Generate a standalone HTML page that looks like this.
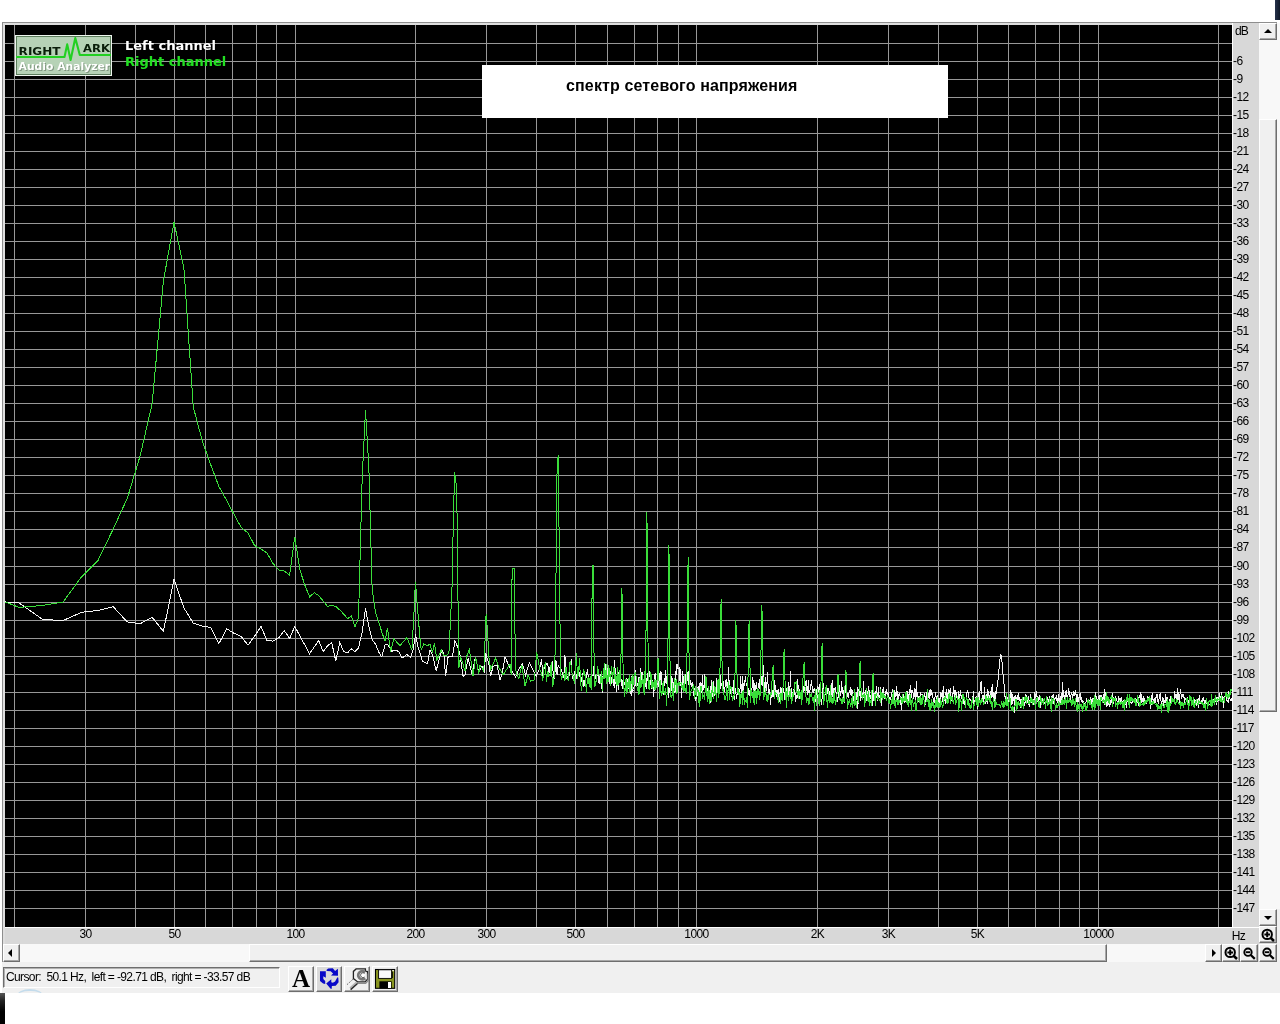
<!DOCTYPE html>
<html lang="ru"><head><meta charset="utf-8"><title>RightMark Audio Analyzer - спектр сетевого напряжения</title>
<style>
html,body{margin:0;padding:0;width:1280px;height:1024px;overflow:hidden;background:#fff}
body{position:relative;font-family:"Liberation Sans",sans-serif;font-size:12px;color:#000}
div,svg{position:absolute;box-sizing:border-box}
#win{left:0;top:22px;width:1280px;height:971px;background:#f0f0f0}
#lwhite{left:0;top:0;width:2px;height:993px;background:#fff}
#rwhite{left:1277px;top:0;width:3px;height:23px;background:#fff}
#frame{left:2px;top:22px;width:1275px;height:940px;border:solid #8e8e8e;border-width:1px 0 0 1px;background:#d8d8d8}
#frame2{left:3px;top:23px;width:1274px;height:939px;border:solid #dedede;border-width:2px 0 0 2px}
#plotbg{left:5px;top:25px;width:1227px;height:902px;background:#000}
#pl{left:0;top:0;width:1280px;height:1024px}
#axr{left:1232px;top:23px;width:27px;height:921px;background:#d8d8d8;border-left:1px solid #fff}
#axb{left:5px;top:927px;width:1254px;height:17px;background:#d8d8d8;border-top:1px solid #fff}
.yl{left:1233px;width:30px;height:14px;line-height:14px;font-size:12px;letter-spacing:-0.6px;white-space:nowrap}
.xl{top:927px;width:41px;height:14px;line-height:14px;text-align:center;font-size:12px;letter-spacing:-0.6px;white-space:nowrap}
#vs{left:1259px;top:23px;width:21px;height:886px;background:#f8f8f8}
#hs{left:3px;top:944px;width:1203px;height:18px;background:#f8f8f8}
.btn{background:#f0f0f0;border:1px solid;border-color:#fff #6e6e6e #6e6e6e #fff;box-shadow:inset -1px -1px 0 #a8a8a8}
.mag{left:0;top:0;width:16px;height:16px}
.tri{width:0;height:0;border-style:solid}
#title{left:482px;top:65px;width:466px;height:53px;background:#fff}
#title span{will-change:transform;position:absolute;left:84px;top:11px;font-size:16px;letter-spacing:0.14px;font-weight:bold;line-height:20px;white-space:nowrap;color:#000}
#legend{left:124.5px;will-change:transform;top:38px;font-family:"DejaVu Sans","Liberation Sans",sans-serif;font-weight:bold;font-size:13px;line-height:16px;white-space:nowrap}
#status{left:3px;top:967px;width:277px;height:21px;border:1px solid;border-color:#6e6e6e #fff #fff #6e6e6e;box-shadow:inset 1px 1px 0 #b0b0b0;background:#f0f0f0}
#status span{will-change:transform;position:absolute;left:2px;top:2px;font-size:12px;letter-spacing:-0.62px;white-space:pre;line-height:14px}
.tb{top:966px;width:26px;height:26px}
</style></head><body>
<div id="win"></div><div id="lwhite"></div><div id="rwhite"></div>
<div id="frame"></div><div id="frame2"></div>
<div id="plotbg"></div>
<div id="axr"></div><div id="axb"></div>
<svg id="pl" viewBox="0 0 1280 1024" shape-rendering="crispEdges">
<defs><clipPath id="cp"><rect x="5" y="25" width="1227" height="902"/></clipPath></defs>
<path d="M14.5,25V927M85.5,25V927M135.5,25V927M174.5,25V927M205.5,25V927M232.5,25V927M256.5,25V927M276.5,25V927M295.5,25V927M415.5,25V927M486.5,25V927M536.5,25V927M575.5,25V927M607.5,25V927M634.5,25V927M657.5,25V927M678.5,25V927M696.5,25V927M817.5,25V927M888.5,25V927M938.5,25V927M977.5,25V927M1008.5,25V927M1035.5,25V927M1059.5,25V927M1079.5,25V927M1098.5,25V927M1218.5,25V927M5,43.5H1232M5,61.5H1232M5,79.5H1232M5,97.5H1232M5,115.5H1232M5,133.5H1232M5,151.5H1232M5,169.5H1232M5,187.5H1232M5,205.5H1232M5,223.5H1232M5,241.5H1232M5,259.5H1232M5,277.5H1232M5,295.5H1232M5,313.5H1232M5,331.5H1232M5,349.5H1232M5,367.5H1232M5,385.5H1232M5,403.5H1232M5,421.5H1232M5,439.5H1232M5,457.5H1232M5,475.5H1232M5,493.5H1232M5,511.5H1232M5,529.5H1232M5,547.5H1232M5,566.5H1232M5,584.5H1232M5,602.5H1232M5,620.5H1232M5,638.5H1232M5,656.5H1232M5,674.5H1232M5,692.5H1232M5,710.5H1232M5,728.5H1232M5,746.5H1232M5,764.5H1232M5,782.5H1232M5,800.5H1232M5,818.5H1232M5,836.5H1232M5,854.5H1232M5,872.5H1232M5,890.5H1232M5,908.5H1232" stroke="#989898" stroke-width="1" fill="none"/>
<g clip-path="url(#cp)" fill="none" stroke-width="1" stroke-linejoin="miter">
<polyline stroke="#f4f4f4" points="-7.6,601 19.2,603 42.5,619.4 63.1,620.6 81.4,612.3 98,610.5 113.2,606.7 127.2,621.9 140.1,623.7 152.1,617.3 163.4,631.3 174,579.2 183.9,607.9 193.3,623.2 202.3,626.2 210.8,627.5 218.9,643.5 226.7,628.8 234.1,633.3 241.2,636.5 248,645.2 254.6,636 261,626.4 267.1,640.6 273,641.1 278.7,637.8 284.2,630.5 289.6,638.4 294.8,626.4 299.9,636 304.8,645 309.6,653.7 314.2,647 318.7,640.6 323.2,651.5 327.5,646 331.7,642.5 335.8,661.1 339.8,642.5 343.7,651.5 347.5,652.9 351.3,648.8 354.9,651.5 358.5,648 362.1,632.4 365.5,608.3 368.9,626.9 372.2,640 375.5,643.9 378.7,652 381.8,657 385,645 387.5,644.4 391.9,651.2 396.2,650 398.8,651.9 401.9,658.1 406.9,654.4 410.6,657.5 413.1,650 415.6,634.4 417.5,645 422.5,661.2 427.5,663.8 430,650 432.5,655 436.2,670.6 441.9,649.4 443.8,653.8 445.6,676.2 448.1,656.9 452.5,656.2 455,640.6 458.1,648.1 460,655 463.1,676.2 465,675 468.1,658.1 471.9,673.8 475.6,656.9 478.8,672.5 481.9,666.2 484.4,671.2 485.6,653.1 488.8,663.8 490.6,676.2 493.1,666.2 496.9,665 500,680 501.9,675 505,656.9 510,668.1 515.6,676.9 518.8,669.4 522.5,663.8 525.6,675 529.4,662.5 533.8,671.2 536.2,676.2 540,667.5 541.6,659 542.8,676.6 544.1,668.3 545.3,665.3 546.5,663.8 547.7,663.7 548.9,674 550.1,666.1 551.3,664.7 552.5,661.5 553.6,681.8 554.8,674.5 555.9,659.7 557.1,675.4 558.2,665 559.3,668 560.5,667.2 561.6,670.7 562.7,675.3 563.8,677.2 564.9,655.1 566,670.3 567,679.3 568.1,676 569.2,675.8 570.2,662.3 571.3,660.4 572.3,678.3 573.4,676.5 574.4,674.3 575.5,668.4 576.5,678.9 577.5,669.2 578.5,669.2 579.5,675.5 580.5,672.8 581.5,682 582.5,672.9 583.5,686.2 584.4,685 585.4,677.5 586.4,677.7 587.3,669 588.3,677.3 589.3,679.4 590.2,687 591.1,682.1 592.1,675.4 593,675.9 593.9,666.3 594.8,679.6 595.8,676.2 596.7,678.9 597.6,670.7 598.5,680.5 599.4,684 600.2,674.1 600.8,682.7 601.2,680.2 601.8,687.2 602.5,693.3 603.2,670.5 603.8,668.8 604.2,668.3 604.8,675 605.2,664.1 605.8,671 606.2,681.4 606.8,678.7 607.2,667.8 607.8,679.9 608.2,678.5 608.8,666.4 609.5,683.6 610.2,681.4 610.8,670.8 611.2,683.6 611.8,677.7 612.2,676.1 612.8,679 613.5,679.3 614.2,688.1 614.8,660.2 615.5,684 616.2,677.8 616.8,691.7 617.2,669.7 617.8,680.6 618.2,689.8 618.8,671.6 619.2,682.5 619.8,678.8 620.2,674.1 620.8,671.7 621.2,685.5 621.8,682.3 622.2,680.3 622.8,687.8 623.2,689.3 623.8,683.5 624.2,684 624.8,684 625.2,680.7 625.8,683.4 626.2,677.8 626.8,685.9 627.5,679.1 628.5,689.2 629.2,683.9 629.8,689.8 630.5,689.7 631.2,696.2 631.8,676.3 632.2,683.3 632.8,692 633.5,689.5 634.2,686.6 634.8,686.5 635.2,684.7 635.8,670.3 636.2,680.7 636.8,678.9 637.2,686.3 637.8,683.9 638.2,683.2 638.8,676.8 639.2,687.1 639.8,683.5 640.2,671.7 640.8,667.6 641.5,680.8 642.2,671.7 642.8,682.9 643.5,682.4 644.2,679.3 644.8,683 645.2,680.2 645.8,685.8 646.2,689 646.8,681.3 647.2,675.7 647.8,680.6 648.2,667 648.8,679.5 649.5,671 650.2,676.4 650.8,684.1 651.5,688.5 652.2,688.5 652.8,679.7 653.2,689.4 653.8,697.4 654.5,677.2 655.2,673 655.8,685.9 656.5,682.9 657.2,684.5 657.8,684.4 658.2,681.4 658.8,687.2 659.5,679.6 660.2,670.8 660.8,685 661.2,672.3 661.8,681.6 662.2,687.8 662.8,682.6 663.5,694.5 664.5,677.6 665.2,682.9 665.8,670.3 666.2,683.8 666.8,676.3 667.2,680.3 667.8,675.4 668.2,697.8 668.8,691.2 669.2,687.8 669.8,692.4 670.2,692.3 670.8,686.2 671.2,676.1 671.8,690.9 672.2,691.7 672.8,678.4 673.2,684.2 673.8,687.7 674.2,693.1 674.8,679.5 675.5,692.1 676.2,663.6 676.8,674.8 677.2,663.7 677.8,668.6 678.5,668.2 679.5,667.6 680.2,685.7 680.8,668.9 681.2,697.8 681.8,686.7 682.2,685.4 682.8,670.6 683.5,687.6 684.2,682.9 684.8,683.8 685.2,674.2 685.8,683.7 686.2,680.2 686.8,687.7 687.2,672.1 687.8,676.1 688.2,684.8 688.8,671 689.2,676.3 689.8,681.5 690.5,680.6 691.2,686.5 691.8,684.2 692.2,682.5 692.8,682.8 693.5,695.9 694.5,687.8 695.2,699.6 695.8,700.3 696.2,697 696.8,699.1 697.5,688.5 698.2,686.8 698.8,688.9 699.2,696.4 699.8,683.5 700.2,682.4 700.8,697.4 701.2,687.3 701.8,693.2 702.2,675.5 702.8,691.2 703.5,686.3 704.2,687.2 704.8,675.7 705.2,676.5 705.8,689.7 706.2,690.3 706.8,694 707.2,687.6 707.8,697.4 708.2,691.2 708.8,690.7 709.2,698.9 709.8,698.6 710.5,703 711.2,679.7 711.8,699.8 712.2,694.3 712.8,685.7 713.2,681.1 713.8,693.4 714.2,695.8 714.8,692 715.5,689.6 716.2,694.8 716.8,678.1 717.2,685.9 717.8,690.5 718.2,694.2 718.8,685.3 719.2,680.5 719.8,694.3 720.5,675.1 721.2,686.2 721.8,684.7 722.5,679.8 723.2,681 723.8,691.1 724.5,691.7 725.2,684.8 725.8,680.1 726.2,688.8 726.8,678.9 727.5,688.2 728.2,682.8 728.8,667.3 729.2,690.7 729.8,697.4 730.5,686.2 731.2,697 731.8,692.4 732.2,687.2 732.8,688.4 733.2,693.8 733.8,679.6 734.2,699.7 734.8,693.6 735.2,687.9 735.8,690.8 736.2,697.3 736.8,698.5 737.2,692.7 737.8,694.1 738.2,688.6 738.8,688.5 739.5,696.9 740.2,686.3 740.8,676.2 741.2,693 741.8,693.2 742.2,676 742.8,689.1 743.2,696.5 743.8,684.3 744.2,685 744.8,682.3 745.5,675.6 746.2,684.9 746.8,683.8 747.2,688.6 747.8,691.1 748.2,687.7 748.8,693.9 749.5,696.4 750.2,687.9 750.8,686 751.2,694 751.8,695 752.2,681.2 752.8,677.4 753.2,693.6 753.8,679.8 754.2,685.9 754.8,693.5 755.5,693.3 756.2,681.6 756.8,688 757.2,689.2 757.8,693 758.2,684.2 758.8,687.6 759.2,678.8 759.8,688.8 760.2,689.5 760.8,696.3 761.2,676.4 761.8,683.8 762.2,686 762.8,676.5 763.5,665.2 764.2,687.5 764.8,694.3 765.2,688 765.8,677.2 766.2,691.1 766.8,683.3 767.2,680.7 767.8,672.4 768.2,695 768.8,686.2 769.2,691.9 769.8,692.5 770.2,695.9 770.8,705.1 771.2,691.5 771.8,687.1 772.2,692.5 772.8,696.8 773.2,696.8 773.8,687.7 774.2,689.6 774.8,680.4 775.2,689.6 775.8,692.5 776.2,696.8 776.8,689.6 777.2,690.8 777.8,695.2 778.2,689.4 778.8,693.6 779.2,702.2 779.8,696.4 780.2,689.6 780.8,686.6 781.2,689.6 781.8,693.1 782.2,690.1 782.8,690.5 783.2,687.9 783.8,692.4 784.2,692.7 784.8,699.9 785.2,690.3 785.8,689.9 786.2,687.8 786.8,697.4 787.2,688.6 787.8,690.7 788.2,699 788.8,682.2 789.2,691.7 789.8,692.1 790.5,671.2 791.2,693.4 791.8,694.4 792.2,698.3 792.8,695.9 793.2,689.4 793.8,693.7 794.2,685.4 794.8,695 795.2,693 795.8,702 796.2,695.5 796.8,699 797.2,697.7 797.8,678.8 798.2,689.8 798.8,694 799.2,689 799.8,698 800.2,697.8 800.8,692.1 801.2,691.4 801.8,696.8 802.2,688.5 802.8,685.2 803.2,686.2 803.8,691.1 804.2,690.5 804.8,687.1 805.5,682 806.5,680.6 807.2,694.4 807.8,692.5 808.2,680.2 808.8,690.7 809.2,694.8 809.8,693.1 810.2,687 810.8,686.3 811.5,680.4 812.5,690.9 813.2,689.6 813.8,692.5 814.2,688.5 814.8,689.4 815.2,691.7 815.8,702.3 816.2,688.9 816.8,696.8 817.2,698.1 817.8,686 818.2,692 818.8,690.7 819.2,684.1 819.8,694.1 820.5,701.7 821.2,702.4 821.8,704.4 822.2,694.8 822.8,688.3 823.2,682.9 823.8,697 824.5,695.2 825.2,694.3 825.8,694.9 826.2,690 826.8,685.3 827.2,693.3 827.8,688.4 828.2,698.2 828.8,688.4 829.2,693.1 829.8,698.9 830.2,690.5 830.8,696.4 831.2,693.1 831.8,687.3 832.2,680.5 832.8,697.2 833.2,695 833.8,688 834.5,690 835.2,688.4 835.8,687.9 836.2,695.1 836.8,699.3 837.2,697 837.8,702.2 838.5,690.2 839.5,685.4 840.2,695.6 840.8,691.6 841.2,691.5 841.8,680.7 842.2,692.8 842.8,692.6 843.5,698.6 844.2,686.3 844.8,703.2 845.2,685.1 845.8,679.5 846.2,682.9 846.8,692.1 847.2,693.9 847.8,695.8 848.2,698.3 848.8,693.4 849.2,692.5 849.8,690.5 850.2,694.7 850.8,686.6 851.2,696.1 851.8,688.8 852.2,691.4 852.8,693.8 853.5,701.4 854.2,696 854.8,699.3 855.2,702.7 855.8,695.8 856.2,699.3 856.8,698.2 857.2,687.1 857.8,709.4 858.2,700.4 858.8,689.1 859.2,695.5 859.8,690.6 860.2,701.3 860.8,691.4 861.2,697.6 861.8,696.5 862.5,693.5 863.2,698 863.8,681.5 864.2,701.1 864.8,696.7 865.2,699 865.8,690.1 866.2,700.8 866.8,691.5 867.2,695.8 867.8,697.3 868.2,686.1 868.8,687 869.5,696.2 870.2,698.9 870.8,694.9 871.2,696.5 871.8,693.7 872.2,705.6 872.8,690.3 873.2,689.2 873.8,701.2 874.2,697.9 874.8,694.5 875.2,691.5 875.8,698.9 876.2,697.3 876.8,685.9 877.2,700.4 877.8,700.3 878.2,686.7 878.8,698.8 879.5,696.2 880.2,695.2 880.8,686.8 881.5,706.1 882.2,693.9 882.8,689.9 883.2,687.6 883.8,690.1 884.2,697 884.8,699.3 885.5,694.1 886.2,689.4 886.8,691 887.2,695.7 887.8,692.2 888.2,694.7 888.8,699.8 889.2,703.2 889.8,698.3 890.2,699.2 890.8,697.2 891.5,696.2 892.2,689.9 892.8,690.9 893.2,692.6 893.8,695.4 894.2,700.1 894.8,690.1 895.2,693.3 895.8,697.4 896.2,694.1 896.8,686 897.2,695.7 897.8,697.2 898.2,704.4 898.8,695 899.5,693.8 900.2,697.2 900.8,699.3 901.2,710.1 901.8,698.2 902.2,698.9 902.8,696.7 903.2,700.1 903.8,694.2 904.2,702.7 904.8,700 905.2,701.8 905.8,699.5 906.2,691.6 906.8,693.3 907.2,690.8 907.8,704.7 908.2,701.4 908.8,699.5 909.2,689.1 909.8,695.5 910.2,684.9 910.8,687 911.2,698.2 911.8,689.6 912.2,690.7 912.8,692.5 913.2,694.2 913.8,698.5 914.2,695.8 914.8,688.4 915.2,701.6 915.8,699 916.2,681.2 916.8,697.1 917.2,692.7 917.8,692.3 918.2,701.7 918.8,696.2 919.5,696.4 920.2,699.5 920.8,692.3 921.2,695 921.8,694.3 922.5,695.3 923.5,696.1 924.2,696.2 924.8,693.4 925.2,697.9 925.8,704.5 926.5,691.6 927.2,697.2 927.8,691.8 928.2,694.3 928.8,697.5 929.2,698.6 929.8,690.1 930.2,696.2 930.8,688.8 931.2,690.8 931.8,694.9 932.2,692.7 932.8,697 933.2,698.9 933.8,703.1 934.2,702.7 934.8,702 935.2,692.9 935.8,693.7 936.5,701.7 937.2,695.1 937.8,700.6 938.2,699.3 938.8,702 939.5,697.9 940.2,707 940.8,692.5 941.2,693.3 941.8,694.1 942.5,702.3 943.2,685.9 943.8,705.5 944.2,696.5 944.8,698.3 945.2,703.6 945.8,694.6 946.2,689.3 946.8,693.8 947.2,701.1 947.8,698.2 948.2,688.7 948.8,698.3 949.5,696.9 950.2,687.6 950.8,697.8 951.2,697.5 951.8,701 952.2,693.8 952.8,699.7 953.2,688.5 953.8,686.4 954.2,692.7 954.8,693.1 955.2,705.3 955.8,690.4 956.2,693.9 956.8,695.8 957.2,699.3 957.8,696.1 958.2,699.2 958.8,690.7 959.2,696.7 959.8,698.4 960.2,693.1 960.8,690.3 961.2,699.4 961.8,695.2 962.2,702.3 962.8,695.7 963.2,700.1 963.8,704.3 964.2,700.3 964.8,703.6 965.2,703.1 965.8,701 966.5,696.3 967.2,690.8 967.8,690.9 968.5,696 969.2,698.9 969.8,699.6 970.5,700 971.5,702.3 972.2,699.4 972.8,701.7 973.2,690.8 973.8,707.3 974.2,703.4 974.8,700.2 975.5,700 976.2,695.8 976.8,701.5 977.2,708.5 977.8,708.1 978.2,700.5 978.8,693.5 979.5,699.6 980.5,683.6 981.5,681.6 982.2,699.2 982.8,698.4 983.2,705.3 983.8,696.7 984.2,697.3 984.8,686.6 985.2,704.4 985.8,702.1 986.5,694.5 987.2,704 987.8,689.1 988.2,692.2 988.8,694.5 989.2,697.1 989.8,695.2 990.2,703.3 990.8,696.4 991.2,687.4 991.8,697.7 992.2,684.1 992.8,697.1 993.2,691.8 993.8,696.6 994.5,701.3 995.2,690.7 995.8,698.6 996.2,690 996.8,690 997.2,684 997.8,684 998.2,676 998.8,676 999.2,664 999.8,664 1000.2,654.4 1000.8,654.4 1001.2,655 1001.8,655 1002.2,668 1002.8,668 1003.2,680 1003.8,680 1004.5,692 1005.2,698.1 1005.8,698.2 1006.2,705.1 1006.8,695.3 1007.5,699.9 1008.5,703.8 1009.2,698.9 1009.8,701.3 1010.2,696.3 1010.8,690.2 1011.2,692.8 1011.8,705.3 1012.2,694.5 1012.8,704.4 1013.2,698.5 1013.8,698.2 1014.2,696 1014.8,712.7 1015.2,695.9 1015.8,696 1016.2,698.5 1016.8,697.4 1017.5,700.3 1018.2,693.1 1018.8,700 1019.2,700.2 1019.8,696.7 1020.2,700.3 1020.8,707.8 1021.2,699.2 1021.8,702.1 1022.5,700.4 1023.5,697.4 1024.5,705.5 1025.2,701.4 1025.8,693.6 1026.5,699 1027.5,699.2 1028.2,704.7 1028.8,696.4 1029.5,707.3 1030.5,693.7 1031.2,699.4 1031.8,703.4 1032.5,700.4 1033.2,700 1033.8,705.3 1034.2,697.7 1034.8,691.9 1035.5,697.6 1036.2,696.7 1036.8,691.3 1037.2,700.3 1037.8,701 1038.2,701.8 1038.8,698.2 1039.2,698.8 1039.8,695.4 1040.2,701.8 1040.8,707.8 1041.2,702.2 1041.8,701.2 1042.2,698.6 1042.8,699.9 1043.2,703 1043.8,701.6 1044.5,703.8 1045.2,703.3 1045.8,704.8 1046.2,700.9 1046.8,702.4 1047.2,701.8 1047.8,697.1 1048.2,700.7 1048.8,701.7 1049.2,700 1049.8,696 1050.2,706.6 1050.8,701.8 1051.2,696.6 1051.8,699.1 1052.2,695.6 1052.8,697.9 1053.2,693.9 1053.8,704.2 1054.5,698.8 1055.5,697.4 1056.2,699.2 1056.8,694.8 1057.2,700.2 1057.8,701.3 1058.2,703.6 1058.8,693.8 1059.2,701.7 1059.8,698.9 1060.2,703.5 1060.8,698.7 1061.2,693.4 1061.8,700.2 1062.2,702.3 1062.8,682.4 1063.2,696.1 1063.8,696 1064.2,694.9 1064.8,699.2 1065.5,694 1066.2,690.4 1066.8,696.9 1067.2,695.5 1067.8,698.6 1068.5,687.9 1069.2,694.5 1069.8,690.7 1070.2,701.6 1070.8,696.3 1071.2,694.3 1071.8,692 1072.5,697.3 1073.2,696 1073.8,691.5 1074.2,695.8 1074.8,695.3 1075.2,690 1075.8,694.1 1076.2,694.2 1076.8,699.7 1077.2,703.8 1077.8,693.9 1078.2,701.3 1078.8,701.5 1079.2,693.9 1079.8,697.6 1080.2,698.2 1080.8,693.2 1081.2,701 1081.8,700.9 1082.2,703.2 1082.8,699.8 1083.5,702.6 1084.2,703.7 1084.8,706.6 1085.2,707.4 1085.8,703.4 1086.2,701.5 1086.8,697.9 1087.5,704.8 1088.5,701.5 1089.2,702.7 1089.8,699.6 1090.2,703.6 1090.8,696.6 1091.2,700.7 1091.8,703 1092.2,708.3 1092.8,698.5 1093.2,701.4 1093.8,698.7 1094.2,698.5 1094.8,698.9 1095.2,691.9 1095.8,697.5 1096.2,695.9 1096.8,702 1097.5,700.2 1098.5,699.1 1099.2,694.9 1099.8,703.9 1100.2,694.7 1100.8,702.7 1101.2,700.2 1101.8,695.4 1102.2,698.3 1102.8,700.3 1103.2,702.1 1103.8,700.7 1104.2,689.4 1104.8,704.7 1105.2,700.7 1105.8,691.8 1106.2,707.3 1106.8,701 1107.2,706.1 1107.8,702.1 1108.2,703 1108.8,698 1109.2,707.4 1109.8,702 1110.2,704.9 1110.8,699.9 1111.2,703.1 1111.8,698.6 1112.2,693.2 1112.8,703.7 1113.2,697.3 1113.8,704.3 1114.2,697.8 1114.8,701 1115.2,696 1115.8,699.6 1116.2,699.4 1116.8,698.8 1117.5,707.5 1118.5,696.4 1119.5,700 1120.2,699 1120.8,704.4 1121.2,697.2 1121.8,703.6 1122.5,701.5 1123.2,705.5 1123.8,700.3 1124.2,710.3 1124.8,702.5 1125.2,701.2 1125.8,703.2 1126.5,708 1127.2,697.1 1127.8,701 1128.5,700.8 1129.2,705.5 1129.8,704.5 1130.2,698.3 1130.8,703 1131.5,703.1 1132.5,702.2 1133.5,699.7 1134.5,701.3 1135.2,698 1135.8,703.9 1136.5,700.2 1137.2,698.5 1137.8,699.2 1138.2,705.9 1138.8,698.6 1139.2,696.5 1139.8,697.5 1140.2,691.9 1140.8,703.2 1141.2,694.2 1141.8,702.6 1142.5,699.9 1143.2,702 1143.8,695.6 1144.5,702.3 1145.2,702.1 1145.8,702.4 1146.2,702.8 1146.8,704.2 1147.2,695.7 1147.8,701.8 1148.2,700.3 1148.8,696.7 1149.2,700 1149.8,700.4 1150.5,708.6 1151.5,702.2 1152.2,693.1 1152.8,697.5 1153.2,702 1153.8,699.5 1154.2,698.8 1154.8,702.6 1155.2,702.2 1155.8,697.1 1156.2,698.2 1156.8,693.8 1157.2,702 1157.8,694.3 1158.2,703.6 1158.8,700.4 1159.2,697.8 1159.8,695.1 1160.2,693.3 1160.8,698.6 1161.5,706 1162.2,700.7 1162.8,697.4 1163.2,699.2 1163.8,705.5 1164.2,700.8 1164.8,701.9 1165.2,702.8 1165.8,694.5 1166.2,705.6 1166.8,697 1167.2,702.5 1167.8,697.4 1168.2,706.5 1168.8,707.7 1169.2,699.1 1169.8,706.9 1170.5,696.3 1171.2,703.2 1171.8,700.6 1172.2,699.5 1172.8,698.6 1173.2,699.5 1173.8,700.9 1174.2,700.9 1174.8,691.4 1175.2,698.3 1175.8,694.5 1176.2,697.7 1176.8,701.2 1177.2,688.3 1177.8,702.4 1178.2,698.7 1178.8,692.2 1179.2,702.6 1179.8,695.9 1180.5,688.9 1181.5,699.3 1182.2,693.8 1182.8,696.4 1183.2,697.2 1183.8,694.1 1184.5,703.9 1185.2,699.1 1185.8,698.7 1186.2,701.2 1186.8,701.5 1187.2,701.3 1187.8,697.3 1188.2,702.1 1188.8,705.1 1189.5,699.5 1190.2,700.7 1190.8,698.7 1191.5,701.8 1192.2,701.5 1192.8,703.6 1193.2,704.8 1193.8,705.2 1194.2,699.5 1194.8,703.8 1195.2,703.7 1195.8,699.7 1196.2,704.9 1196.8,705.6 1197.2,703 1197.8,699.2 1198.2,698.7 1198.8,708.4 1199.5,695.5 1200.2,702.6 1200.8,703.8 1201.2,701.9 1201.8,700 1202.2,703.2 1202.8,699.5 1203.2,699.9 1203.8,696.9 1204.2,702.6 1204.8,707.7 1205.2,700.7 1205.8,701.6 1206.2,702 1206.8,702.9 1207.2,704.1 1207.8,704.6 1208.2,702.3 1208.8,705.7 1209.2,704.3 1209.8,704.4 1210.2,703.5 1210.8,704.2 1211.2,705.5 1211.8,703 1212.5,705.9 1213.2,701.8 1213.8,699.9 1214.2,700.6 1214.8,699.9 1215.5,696 1216.2,704.8 1216.8,696.9 1217.2,698 1217.8,701 1218.2,700.6 1218.8,698.1 1219.5,694.2 1220.2,696.2 1220.8,700.3 1221.2,702.4 1221.8,691.8 1222.2,698.7 1222.8,696.9 1223.2,707.8 1223.8,696.9 1224.2,703.1 1224.8,696.4 1225.2,696.1 1225.8,693.7 1226.2,693.4 1226.8,700 1227.2,701.3 1227.8,700.9 1228.2,702.9 1228.8,691.4 1229.2,696.7 1229.8,697.5 1230.2,700.4 1230.8,699.2 1231.5,698.7 1232.2,701.5 1232.8,708.5"/>
<polyline stroke="#3ade3a" points="-7.6,597 19.2,607.4 42.5,605.5 63.1,602 81.4,577 98,560.5 113.2,529 127.2,498.5 140.1,456 152.1,404 163.4,281 174,222.2 183.9,268 193.3,407 202.3,441 210.8,465 218.9,486.5 226.7,500.5 234.1,514.5 241.2,527.5 248,533 254.6,545.5 261,549 267.1,553 273,563.5 278.7,570 284.2,571 289.6,575 294.8,536.7 299.9,570 304.8,585 309.6,596.8 314.2,592.7 318.7,595.5 323.2,601 327.5,606.4 331.7,605.5 335.8,606.5 339.8,610 343.7,614 347.5,618.7 351.3,616 354.9,626.9 358.5,618 362.1,480 365.5,410.4 368.9,468 372.2,590 375.5,612 378.7,622 381.8,632 385,641.2 387.5,628 390.6,651.9 393.8,638.8 400,645.6 406.9,637.5 411.9,650 413.8,616.2 415.4,581.8 417.5,607.5 419.4,631.2 421.2,650 423.8,643.8 426.9,645.6 430,644.4 432.5,652.5 434.4,643.1 436.9,660 441.2,650 443.8,655.6 447.5,655 449.2,650.7 450.5,617.8 451.9,593.2 453.3,522 454.6,472.3 456.5,486.5 457.4,533 458.2,620.6 458.8,668 460.6,656.2 465,671.2 466.2,657.5 469.4,649.4 473.1,676.2 475.6,656.9 478.8,673.8 480,665 483.8,671.2 486.1,613.7 487.5,631.2 488.8,656.2 490.6,669.4 495.6,658.1 498.8,667.5 503.1,675 506.2,670 510,663.8 511.3,675 512.1,568.6 514.3,568.6 515.3,660 516.2,673.8 518.8,678.8 521.9,665 525,686.2 528.1,675 530.6,681.2 534.4,680 536.7,652 540,670 541.6,673.5 542.8,680.6 544.1,666.4 545.3,664 546.5,682.4 547.7,670.8 548.9,676 550.1,675.5 551.3,661.9 552.5,686.5 553.6,682.2 554.8,671.4 555.9,584.8 557.1,465.8 558.2,455 559.3,552.3 560.5,673.6 561.6,678.9 562.7,676.3 563.8,672.1 564.9,681.2 566,666.9 567,677.7 568.1,680.1 569.2,670.7 570.2,660.7 571.3,666.9 572.3,674.9 573.4,677.1 574.4,684.2 575.5,667 576.5,653.4 577.5,678.7 578.5,673.4 579.5,658.5 580.5,680.3 581.5,690.8 582.5,682 583.5,669.1 584.4,672.7 585.4,677.2 586.4,692.9 587.3,680.3 588.3,677 589.3,687 590.2,676.1 591.1,689.5 592.1,590.5 593,565.3 593.9,648.2 594.8,687.2 595.8,682.1 596.7,679.9 597.6,665.6 598.5,673.3 599.4,674.2 600.2,676.4 600.8,683.9 601.2,681.6 601.8,670.8 602.2,690.8 602.8,676.8 603.2,677.9 603.8,674.6 604.2,663 604.8,678.9 605.2,673.4 605.8,678.1 606.2,664.5 606.8,684.4 607.5,675.4 608.2,681.7 608.8,665.3 609.2,670.1 609.8,673.5 610.5,685.9 611.2,670.5 611.8,666 612.2,682.8 612.8,671.9 613.2,673.9 613.8,667.1 614.2,669 614.8,676.9 615.5,675.4 616.2,684.7 616.8,676.4 617.2,685.9 617.8,667 618.2,680.1 618.8,684.9 619.5,678.4 620.2,667.3 620.8,682.3 621.5,587.8 622.5,599.2 623.2,687.1 623.8,680.2 624.2,695.5 624.8,696.9 625.2,686.6 625.8,679.7 626.2,679.4 626.8,694.2 627.2,681.8 627.8,691.8 628.2,684.7 628.8,678.4 629.2,692.3 629.8,674.8 630.2,690.8 630.8,683 631.2,679.9 631.8,677.2 632.2,689 632.8,673.8 633.2,685.1 633.8,676.4 634.5,674.8 635.5,671.7 636.5,680.4 637.2,689.4 637.8,686.8 638.2,695.2 638.8,685.7 639.2,678 639.8,693.7 640.2,682.1 640.8,671.9 641.2,687 641.8,683.5 642.2,683.4 642.8,675.5 643.2,682.4 643.8,690.6 644.2,694.8 644.8,671.1 645.2,677.4 645.8,683.1 646.5,512.5 647.5,533.3 648.2,682.3 648.8,689 649.2,682.1 649.8,689.9 650.2,671.8 650.8,673.6 651.2,674.6 651.8,686 652.2,688.9 652.8,682.4 653.2,682.8 653.8,684.8 654.2,689.5 654.8,678.6 655.2,689.8 655.8,680.8 656.2,680.5 656.8,687.6 657.5,661.2 658.5,657.7 659.2,689.5 659.8,698.9 660.5,679.7 661.2,695.5 661.8,694.5 662.5,691.4 663.2,680.8 663.8,691 664.2,694.4 664.8,693 665.2,688.6 665.8,690.4 666.5,706.2 667.2,690.8 667.8,681.3 668.5,545.2 669.5,562.4 670.2,696.9 670.8,694.4 671.5,696.6 672.2,695.4 672.8,683.1 673.2,700.6 673.8,688.2 674.2,691.2 674.8,678 675.5,685.4 676.2,679 676.8,694.1 677.2,691.4 677.8,683.5 678.5,682.6 679.2,685.1 679.8,682.6 680.5,683.6 681.5,682.5 682.2,689.8 682.8,685.5 683.2,688.4 683.8,692.4 684.2,674.6 684.8,689.8 685.2,691.5 685.8,688.4 686.2,693.9 686.8,689.1 687.5,573.4 688.5,557.4 689.2,688.3 689.8,699.8 690.2,693.6 690.8,691.1 691.5,690 692.5,688 693.5,683.7 694.2,693 694.8,699 695.5,686.5 696.2,696.9 696.8,696.1 697.2,687.9 697.8,690.4 698.2,690.8 698.8,699.4 699.2,706.8 699.8,691.8 700.2,700.8 700.8,686 701.2,690 701.8,686 702.2,695.2 702.8,697.7 703.5,695.9 704.2,694.6 704.8,700 705.5,676 706.5,678 707.2,702.1 707.8,696.9 708.2,685.8 708.8,693 709.2,703.9 709.8,689.7 710.5,699.2 711.2,701.9 711.8,698.9 712.2,682.5 712.8,692.2 713.2,692.8 713.8,699.3 714.2,688.7 714.8,685.9 715.2,688 715.8,692.2 716.5,701.8 717.5,684.9 718.2,678.7 718.8,697.8 719.2,686.2 719.8,694.1 720.5,610.1 721.5,598.8 722.2,683.7 722.8,690.3 723.2,692.2 723.8,689.5 724.2,700.1 724.8,696.5 725.2,698.2 725.8,699.8 726.2,693.3 726.8,685.6 727.2,701.3 727.8,691.1 728.2,689.7 728.8,680.7 729.2,699.5 729.8,684.8 730.5,688.7 731.5,687.8 732.2,698.9 732.8,700.7 733.2,694.9 733.8,699 734.2,692.3 734.8,695.9 735.5,620.1 736.5,628.9 737.2,690.6 737.8,691.7 738.2,694.6 738.8,689.5 739.2,694.1 739.8,706.7 740.2,701.7 740.8,693.6 741.5,697.7 742.2,691.2 742.8,704.7 743.2,696.4 743.8,690 744.2,704.6 744.8,700.1 745.5,701.7 746.2,702.2 746.8,697.5 747.2,708.2 747.8,697.8 748.5,629 749.5,620.1 750.2,686 750.8,703.1 751.2,689.7 751.8,694.5 752.2,694.9 752.8,697.8 753.2,689.8 753.8,701.7 754.2,704.8 754.8,692.4 755.2,693.1 755.8,690.1 756.2,703.7 756.8,693.2 757.2,688.5 757.8,698.3 758.2,691.2 758.8,689.6 759.2,700.1 759.8,691 760.5,696.1 761.5,604.9 762.5,615.7 763.2,697.8 763.8,699.7 764.2,692.3 764.8,697.4 765.2,690.7 765.8,688.6 766.2,700.9 766.8,695.1 767.2,695.6 767.8,700.5 768.2,699.8 768.8,694.1 769.5,694.6 770.2,693.7 770.8,696.7 771.2,694.4 771.8,686.5 772.5,668.9 773.5,665.3 774.2,699 774.8,695.7 775.2,692.1 775.8,694.4 776.5,693.6 777.2,694.2 777.8,696.2 778.2,702.8 778.8,697 779.5,696.5 780.2,693.2 780.8,703.5 781.2,696.6 781.8,695.3 782.2,691.3 782.8,701.1 783.5,654.5 784.5,648.8 785.2,691.4 785.8,691.5 786.2,707.5 786.8,697 787.2,686.7 787.8,692.7 788.2,701.1 788.8,694.6 789.5,696.2 790.2,689.5 790.8,699.1 791.2,697.3 791.8,703.9 792.2,698.3 792.8,692.6 793.5,697.4 794.5,683 795.5,683.6 796.2,681 796.8,690.5 797.2,692.4 797.8,694.9 798.2,688.7 798.8,698.5 799.5,690.9 800.5,698.9 801.2,690.2 801.8,704.8 802.5,690.3 803.5,666.2 804.5,662 805.2,695.1 805.8,691.3 806.2,701.7 806.8,702.4 807.2,697.8 807.8,701.4 808.2,698.3 808.8,705.2 809.2,703.2 809.8,693.5 810.5,696.4 811.2,695.1 811.8,692.8 812.2,701.1 812.8,697.9 813.2,702.6 813.8,698.9 814.2,694.9 814.8,710.9 815.2,689.5 815.8,689.8 816.2,706.3 816.8,695.6 817.2,694.6 817.8,688.6 818.2,698 818.8,702.4 819.2,706.2 819.8,690.2 820.2,701.6 820.8,694.8 821.5,649.7 822.5,643.1 823.2,704.9 823.8,699.7 824.2,699.9 824.8,697.4 825.5,687.4 826.5,686 827.2,707.9 827.8,704.9 828.2,696.6 828.8,691.2 829.2,697.7 829.8,702.7 830.2,701 830.8,685.3 831.2,703.3 831.8,700.6 832.2,697.8 832.8,704.4 833.5,699.6 834.2,690.4 834.8,698.8 835.2,703.5 835.8,704.8 836.2,696.8 836.8,701.8 837.5,676.9 838.5,674 839.2,697.9 839.8,697.7 840.2,701.1 840.8,697.7 841.2,700.1 841.8,704.2 842.2,696.8 842.8,703.9 843.2,700.8 843.8,699.1 844.5,701.5 845.5,670.3 846.5,673.7 847.2,708.5 847.8,704.8 848.2,704.9 848.8,702 849.2,699.8 849.8,700.1 850.2,706.2 850.8,706.9 851.2,703.3 851.8,704 852.2,694.1 852.8,707.8 853.2,701.7 853.8,702.7 854.2,705.9 854.8,688.9 855.5,702.4 856.5,707.7 857.2,698.7 857.8,698.6 858.2,696.5 858.8,702.6 859.5,665.5 860.5,660.9 861.2,696.9 861.8,692.9 862.2,697.4 862.8,699.8 863.2,693.9 863.8,695.7 864.2,692.7 864.8,706.7 865.2,700.6 865.8,703.4 866.2,688.5 866.8,693.4 867.2,694.5 867.8,701.3 868.5,691.1 869.2,705.8 869.8,697.2 870.2,702.9 870.8,699.7 871.2,705.7 871.8,695.9 872.5,676 873.5,672.8 874.2,701 874.8,695.3 875.2,706.1 875.8,695.6 876.2,693.1 876.8,695.5 877.2,697.2 877.8,700.4 878.2,697.8 878.8,697.8 879.2,700.3 879.8,699.7 880.2,702.6 880.8,689.4 881.2,697.8 881.8,692 882.2,694.7 882.8,700.4 883.5,692.6 884.2,695.6 884.8,698.3 885.2,695.9 885.8,698.5 886.5,699.6 887.2,697.8 887.8,695.2 888.5,701.8 889.2,700.9 889.8,699.4 890.2,708.9 890.8,707.3 891.2,703.1 891.8,704.8 892.2,694.2 892.8,703.7 893.2,689.9 893.8,703.5 894.2,700.3 894.8,702.7 895.2,707.9 895.8,700.3 896.2,701.4 896.8,698.1 897.2,702.6 897.8,705.2 898.2,699.4 898.8,704.8 899.2,701.4 899.8,703 900.2,696.8 900.8,698.5 901.5,698.2 902.2,704.1 902.8,694.2 903.2,701.6 903.8,701.5 904.2,699.6 904.8,700.2 905.2,692.3 905.8,698.9 906.2,703.1 906.8,692.5 907.2,704.9 907.8,699.2 908.5,706.5 909.2,701.9 909.8,696.6 910.2,694.5 910.8,699.5 911.2,710.8 911.8,701.2 912.2,698.5 912.8,702.4 913.2,703.4 913.8,706.7 914.2,701.7 914.8,704.3 915.2,700.4 915.8,711.4 916.5,709.2 917.2,700.1 917.8,698.2 918.5,699.4 919.5,702.9 920.2,695.7 920.8,704.5 921.5,703.9 922.2,695.4 922.8,703.6 923.2,694.7 923.8,698 924.2,702.6 924.8,706.5 925.2,702.1 925.8,703.2 926.5,700.3 927.2,700.8 927.8,689 928.2,707.4 928.8,702.1 929.2,710.4 929.8,699.9 930.5,711.3 931.2,707.2 931.8,698.8 932.2,705.6 932.8,703.1 933.2,702.9 933.8,704.6 934.2,711.8 934.8,710.4 935.2,699.8 935.8,707.8 936.5,704.5 937.2,696.9 937.8,708.4 938.2,705.4 938.8,702.4 939.2,704 939.8,707.8 940.2,698.9 940.8,706.7 941.2,701.6 941.8,702.6 942.2,707.4 942.8,706.6 943.2,705.9 943.8,699.3 944.2,697.2 944.8,700.4 945.5,695.1 946.5,701.2 947.2,699.3 947.8,704.1 948.2,702.6 948.8,693.9 949.2,698.8 949.8,693.4 950.2,698.3 950.8,703.5 951.2,698 951.8,696.7 952.5,699.6 953.5,704.1 954.2,698.2 954.8,699.4 955.2,695.4 955.8,704.6 956.5,700.8 957.2,699.6 957.8,696.5 958.2,700.6 958.8,712.3 959.5,697.8 960.2,701 960.8,699.5 961.2,701.9 961.8,711.3 962.2,694.2 962.8,703.5 963.2,694.8 963.8,694.9 964.2,700 964.8,697.6 965.5,707.8 966.2,697.4 966.8,698.4 967.2,700.3 967.8,704.4 968.2,704.9 968.8,699.4 969.2,708.4 969.8,702.7 970.2,706.6 970.8,708.5 971.5,707.6 972.2,697.4 972.8,698.3 973.2,707.9 973.8,709.7 974.2,703 974.8,703.8 975.5,699.3 976.2,698.1 976.8,703.8 977.2,705.6 977.8,699.1 978.2,696.7 978.8,706.6 979.2,700.7 979.8,700.2 980.2,705.4 980.8,701.2 981.2,702.2 981.8,698.1 982.2,700.2 982.8,699.6 983.2,704.9 983.8,704.8 984.2,700.7 984.8,704 985.2,699.3 985.8,696.3 986.2,696.9 986.8,700.1 987.2,698.9 987.8,701.2 988.2,696.4 988.8,699.6 989.5,699.1 990.2,703.7 990.8,694.9 991.2,706.3 991.8,702.9 992.2,710.4 992.8,703 993.2,701.9 993.8,698.3 994.5,708.4 995.2,705.9 995.8,699.2 996.2,704.5 996.8,704.9 997.2,704.2 997.8,704.8 998.5,704.6 999.5,704.3 1000.5,707 1001.5,702.3 1002.2,703.2 1002.8,707 1003.2,701.1 1003.8,707.8 1004.2,706.6 1004.8,701.6 1005.2,704.7 1005.8,699.2 1006.2,706 1006.8,692.7 1007.2,704.4 1007.8,702.7 1008.2,709.2 1008.8,704.9 1009.2,700.4 1009.8,694.3 1010.2,700.3 1010.8,704.6 1011.2,710.2 1011.8,709.7 1012.2,705.7 1012.8,709.6 1013.5,711.9 1014.2,705.3 1014.8,707.2 1015.2,705.2 1015.8,700 1016.2,698.8 1016.8,711.4 1017.5,704 1018.2,701.2 1018.8,703.9 1019.2,706.4 1019.8,703 1020.2,705.7 1020.8,706.6 1021.2,708.1 1021.8,701.6 1022.5,697 1023.2,708.6 1023.8,703.5 1024.2,696.8 1024.8,701.1 1025.2,696.5 1025.8,698.2 1026.2,704 1026.8,697.2 1027.2,697.2 1027.8,698.2 1028.5,703.7 1029.2,700.9 1029.8,704.3 1030.2,698.5 1030.8,702.9 1031.2,701.5 1031.8,697.1 1032.2,699.9 1032.8,703.4 1033.5,702.3 1034.2,699.8 1034.8,703.8 1035.5,708.9 1036.5,699.2 1037.2,697.5 1037.8,699.1 1038.5,705.9 1039.2,704.6 1039.8,708.4 1040.2,696 1040.8,700.8 1041.2,698.5 1041.8,703.7 1042.5,702.3 1043.2,700.5 1043.8,704.9 1044.2,698.3 1044.8,699.8 1045.2,702.6 1045.8,709 1046.2,695.8 1046.8,702.6 1047.2,701.6 1047.8,706 1048.2,702.2 1048.8,704.8 1049.2,703.1 1049.8,697.9 1050.2,703 1050.8,705.8 1051.2,711.5 1051.8,697 1052.2,703.5 1052.8,699.8 1053.2,698.5 1053.8,700.1 1054.2,700.1 1054.8,703.5 1055.2,705.6 1055.8,710.4 1056.2,705.5 1056.8,703 1057.2,707.2 1057.8,707.7 1058.5,700.6 1059.2,704.5 1059.8,705.5 1060.2,704.2 1060.8,703.9 1061.2,704.4 1061.8,703.1 1062.2,698.2 1062.8,704.9 1063.5,703.2 1064.2,699.3 1064.8,705.2 1065.5,696.6 1066.2,701.8 1066.8,709.4 1067.2,697.3 1067.8,702.4 1068.2,701.1 1068.8,702.8 1069.2,700.9 1069.8,698.5 1070.2,701.3 1070.8,700.5 1071.2,705.9 1071.8,700 1072.2,704.6 1072.8,698.2 1073.5,701.4 1074.5,707.2 1075.2,698.2 1075.8,703.2 1076.2,706.3 1076.8,708.7 1077.2,711.6 1077.8,702.4 1078.5,708.7 1079.2,709.5 1079.8,705.6 1080.2,704.4 1080.8,706.1 1081.2,708.5 1081.8,705.3 1082.2,706.4 1082.8,711.9 1083.5,702.1 1084.5,705.3 1085.2,703.5 1085.8,711.1 1086.2,706.1 1086.8,710.8 1087.5,702.1 1088.5,698.9 1089.2,705.1 1089.8,701.5 1090.2,700.9 1090.8,703.7 1091.5,708.1 1092.2,702 1092.8,710.4 1093.2,703.2 1093.8,704.4 1094.2,694.7 1094.8,710.1 1095.2,706.4 1095.8,697.1 1096.2,700.9 1096.8,703.7 1097.2,704.7 1097.8,700.9 1098.2,699.4 1098.8,703.7 1099.2,705.8 1099.8,700.2 1100.2,709.9 1100.8,697.5 1101.2,697.5 1101.8,699.4 1102.5,702.1 1103.2,702 1103.8,699.7 1104.2,701 1104.8,702.6 1105.2,705.3 1105.8,699.5 1106.2,692.5 1106.8,701.8 1107.2,700.4 1107.8,696.1 1108.5,699.8 1109.2,703.7 1109.8,699.8 1110.2,698.6 1110.8,698.7 1111.2,694.8 1111.8,698.9 1112.2,696.8 1112.8,706.6 1113.2,698.8 1113.8,699.5 1114.2,698 1114.8,701.1 1115.2,698.5 1115.8,706.6 1116.2,703.8 1116.8,703.6 1117.2,703.1 1117.8,708.9 1118.2,701.7 1118.8,705.1 1119.2,703.7 1119.8,700.6 1120.5,704 1121.2,703.4 1121.8,701 1122.2,702.6 1122.8,708.4 1123.2,700.8 1123.8,705.2 1124.2,711 1124.8,698.8 1125.2,703.6 1125.8,701.1 1126.2,701.7 1126.8,700.4 1127.2,694.4 1127.8,700.8 1128.2,697.9 1128.8,705.3 1129.2,694.2 1129.8,708.3 1130.2,696.9 1130.8,699.1 1131.2,700.6 1131.8,696.7 1132.2,700.7 1132.8,697.9 1133.2,702.4 1133.8,699.1 1134.2,698.4 1134.8,700.3 1135.2,705.7 1135.8,699.2 1136.2,704.9 1136.8,705.7 1137.5,695.4 1138.2,699.4 1138.8,701.2 1139.5,707.4 1140.2,700.4 1140.8,705.9 1141.2,704.5 1141.8,705 1142.2,703.5 1142.8,704.2 1143.2,702.3 1143.8,706.2 1144.5,703.8 1145.2,700.5 1145.8,703.7 1146.2,700.4 1146.8,703.4 1147.5,697.9 1148.2,700.2 1148.8,700.3 1149.2,696.1 1149.8,703.9 1150.2,698.5 1150.8,705.4 1151.5,702.1 1152.2,704.9 1152.8,701.6 1153.2,701.4 1153.8,703.2 1154.5,703.5 1155.5,704.9 1156.2,704.8 1156.8,703.6 1157.2,709.5 1157.8,704 1158.2,709.4 1158.8,704.9 1159.2,708.4 1159.8,705.9 1160.2,708 1160.8,704.1 1161.2,712.8 1161.8,705.5 1162.2,703.5 1162.8,703.2 1163.2,707.6 1163.8,707 1164.2,707.4 1164.8,704.9 1165.5,704.6 1166.2,704.1 1166.8,701.1 1167.2,712.4 1167.8,698.9 1168.2,705 1168.8,713.1 1169.2,706.7 1169.8,701.4 1170.5,705.5 1171.2,703.4 1171.8,696.5 1172.2,700.1 1172.8,701.2 1173.5,701.6 1174.2,698.8 1174.8,703.7 1175.2,704.5 1175.8,702.6 1176.2,702.5 1176.8,699.6 1177.2,700.8 1177.8,700.6 1178.2,703.3 1178.8,702.8 1179.2,704.4 1179.8,703 1180.2,702.4 1180.8,708.5 1181.2,703.6 1181.8,702.4 1182.5,702.7 1183.2,707.5 1183.8,702.8 1184.2,704.9 1184.8,703.3 1185.5,704.3 1186.5,699.9 1187.2,697.9 1187.8,705 1188.2,702.7 1188.8,710 1189.2,702.7 1189.8,695.4 1190.2,697.2 1190.8,701.4 1191.2,697 1191.8,706.3 1192.2,703.8 1192.8,703.3 1193.2,697.5 1193.8,706.5 1194.2,703.2 1194.8,707.5 1195.2,702.8 1195.8,704.1 1196.2,698.8 1196.8,701.7 1197.2,704.6 1197.8,703.6 1198.2,704.8 1198.8,699.9 1199.2,702.2 1199.8,702.2 1200.2,702.8 1200.8,701.5 1201.5,702.9 1202.2,703.9 1202.8,701.8 1203.2,704.2 1203.8,707.2 1204.2,706.4 1204.8,703.8 1205.2,710.9 1205.8,709.9 1206.2,698 1206.8,699.3 1207.5,709.4 1208.5,703 1209.2,700.9 1209.8,701.8 1210.2,701.4 1210.8,704.5 1211.2,706.9 1211.8,694.4 1212.2,703.1 1212.8,706.4 1213.2,700.7 1213.8,700.6 1214.2,704.7 1214.8,700.1 1215.2,695.4 1215.8,700.8 1216.2,698.9 1216.8,703 1217.2,699.6 1217.8,698.7 1218.2,699.1 1218.8,699.2 1219.2,700.2 1219.8,696.8 1220.2,701.6 1220.8,701.4 1221.2,695.5 1221.8,699.5 1222.2,703.3 1222.8,700.9 1223.2,698.6 1223.8,699.2 1224.2,702.4 1224.8,701.6 1225.2,692.7 1225.8,694.4 1226.2,697.3 1226.8,691.9 1227.2,695.1 1227.8,698.9 1228.2,696.8 1228.8,696.5 1229.2,691.9 1229.8,695.3 1230.2,694.3 1230.8,689.1 1231.2,690.9 1231.8,689.4 1232.2,689.7 1232.8,689.5"/>
</g>
</svg>
<div id="title"><span>спектр сетевого напряжения</span></div>
<div id="logo" style="will-change:transform;left:15px;top:35px;width:97px;height:41px;background:#b6d2b6;border:1px solid #eef6ee;box-shadow:inset 0 0 0 1px #5c7c5c">
<svg style="left:-1px;top:-1px;width:97px;height:41px" viewBox="15 35 97 41">
<text x="18.6" y="54.6" font-family="DejaVu Sans, Liberation Sans, sans-serif" font-weight="bold" font-size="10.8" textLength="42" lengthAdjust="spacingAndGlyphs" fill="#0a1e0a">RIGHT</text>
<text x="83" y="52" font-family="DejaVu Sans, Liberation Sans, sans-serif" font-weight="bold" font-size="10.8" textLength="27" lengthAdjust="spacingAndGlyphs" fill="#0a1e0a">ARK</text>
<polyline points="16,57 64.5,57 67.2,44.4 70.6,60 75.3,38 79.8,55 111,55" fill="none" stroke="#22d022" stroke-width="2.1" stroke-linejoin="round"/>
<text x="19.6" y="71" font-family="DejaVu Sans, Liberation Sans, sans-serif" font-weight="bold" font-size="10.8" textLength="91.5" lengthAdjust="spacingAndGlyphs" fill="#7e957e">Audio Analyzer</text>
<text x="18.6" y="70" font-family="DejaVu Sans, Liberation Sans, sans-serif" font-weight="bold" font-size="10.8" textLength="91.5" lengthAdjust="spacingAndGlyphs" fill="#fff">Audio Analyzer</text>
</svg></div>
<div id="legend"><span style="color:#fff">Left channel</span><br><span style="color:#22e022">Right channel</span></div>
<div id="lbl" style="left:0;top:0;width:1280px;height:1024px;will-change:transform"><div class="yl" style="top:24px;left:1235px;letter-spacing:-0.9px">dB</div>
<div class="yl" style="top:54px">-6</div><div class="yl" style="top:72px">-9</div><div class="yl" style="top:90px">-12</div><div class="yl" style="top:108px">-15</div><div class="yl" style="top:126px">-18</div><div class="yl" style="top:144px">-21</div><div class="yl" style="top:162px">-24</div><div class="yl" style="top:180px">-27</div><div class="yl" style="top:198px">-30</div><div class="yl" style="top:216px">-33</div><div class="yl" style="top:234px">-36</div><div class="yl" style="top:252px">-39</div><div class="yl" style="top:270px">-42</div><div class="yl" style="top:288px">-45</div><div class="yl" style="top:306px">-48</div><div class="yl" style="top:324px">-51</div><div class="yl" style="top:342px">-54</div><div class="yl" style="top:360px">-57</div><div class="yl" style="top:378px">-60</div><div class="yl" style="top:396px">-63</div><div class="yl" style="top:414px">-66</div><div class="yl" style="top:432px">-69</div><div class="yl" style="top:450px">-72</div><div class="yl" style="top:468px">-75</div><div class="yl" style="top:486px">-78</div><div class="yl" style="top:504px">-81</div><div class="yl" style="top:522px">-84</div><div class="yl" style="top:540px">-87</div><div class="yl" style="top:559px">-90</div><div class="yl" style="top:577px">-93</div><div class="yl" style="top:595px">-96</div><div class="yl" style="top:613px">-99</div><div class="yl" style="top:631px">-102</div><div class="yl" style="top:649px">-105</div><div class="yl" style="top:667px">-108</div><div class="yl" style="top:685px">-111</div><div class="yl" style="top:703px">-114</div><div class="yl" style="top:721px">-117</div><div class="yl" style="top:739px">-120</div><div class="yl" style="top:757px">-123</div><div class="yl" style="top:775px">-126</div><div class="yl" style="top:793px">-129</div><div class="yl" style="top:811px">-132</div><div class="yl" style="top:829px">-135</div><div class="yl" style="top:847px">-138</div><div class="yl" style="top:865px">-141</div><div class="yl" style="top:883px">-144</div><div class="yl" style="top:901px">-147</div>
<div class="xl" style="left:65px">30</div><div class="xl" style="left:154px">50</div><div class="xl" style="left:275px">100</div><div class="xl" style="left:395px">200</div><div class="xl" style="left:466px">300</div><div class="xl" style="left:555px">500</div><div class="xl" style="left:676px">1000</div><div class="xl" style="left:797px">2K</div><div class="xl" style="left:868px">3K</div><div class="xl" style="left:957px">5K</div><div class="xl" style="left:1078px">10000</div>
<div class="xl" style="left:1218px;top:929px">Hz</div></div>
<div id="vs"></div><div id="hs"></div>
<div class="btn" style="left:1259px;top:23px;width:18px;height:17px"><div class="tri" style="left:4px;top:5px;border-width:0 4px 4px 4px;border-color:transparent transparent #000 transparent"></div></div>
<div class="btn" id="vthumb" style="left:1259px;top:119px;width:18px;height:593px"></div>
<div class="btn" style="left:1259px;top:909px;width:18px;height:17px"><div class="tri" style="left:4px;top:6px;border-width:4px 4px 0 4px;border-color:#000 transparent transparent transparent"></div></div>
<div class="btn" style="left:1259px;top:926px;width:18px;height:17px"><svg class="mag" viewBox="0 0 16 16"><circle cx="7.2" cy="7.4" r="4.7" fill="none" stroke="#000" stroke-width="2"/><path d="M4.4 7.4h5.6M7.2 4.6v5.6" stroke="#000" stroke-width="2"/><path d="M10.6 10.8l3.4 3.2" stroke="#000" stroke-width="2.6"/></svg></div>
<div class="btn" style="left:3px;top:944px;width:17px;height:18px"><div class="tri" style="left:4px;top:4px;border-width:4px 4px 4px 0;border-color:transparent #000 transparent transparent"></div></div>
<div class="btn" id="hthumb" style="left:249px;top:944px;width:858px;height:18px"></div>
<div class="btn" style="left:1205px;top:944px;width:17px;height:18px"><div class="tri" style="left:6px;top:4px;border-width:4px 0 4px 4px;border-color:transparent transparent transparent #000"></div></div>
<div class="btn" style="left:1222px;top:944px;width:18px;height:18px"><svg class="mag" viewBox="0 0 16 16"><circle cx="7.2" cy="7.4" r="4.7" fill="none" stroke="#000" stroke-width="2"/><path d="M4.4 7.4h5.6M7.2 4.6v5.6" stroke="#000" stroke-width="2"/><path d="M10.6 10.8l3.4 3.2" stroke="#000" stroke-width="2.6"/></svg></div>
<div class="btn" style="left:1240px;top:944px;width:18px;height:18px"><svg class="mag" viewBox="0 0 16 16"><circle cx="7" cy="7.2" r="3.7" fill="none" stroke="#000" stroke-width="1.9"/><path d="M4.8 7.2h4.4" stroke="#000" stroke-width="1.9"/><path d="M9.8 10l4 3.8" stroke="#000" stroke-width="2.3"/></svg></div>
<div class="btn" style="left:1259px;top:944px;width:18px;height:18px"><svg class="mag" viewBox="0 0 16 16"><circle cx="7" cy="7.2" r="3.7" fill="none" stroke="#000" stroke-width="1.9"/><path d="M4.8 7.2h4.4" stroke="#000" stroke-width="1.9"/><path d="M9.8 10l4 3.8" stroke="#000" stroke-width="2.3"/></svg></div>
<div id="status"><span>Cursor:  50.1 Hz,  left = -92.71 dB,  right = -33.57 dB</span></div>
<div class="btn tb" style="left:288px"><span style="will-change:transform;position:absolute;left:3px;top:-1px;font-family:'Liberation Serif',serif;font-weight:bold;font-size:25px;line-height:26px">A</span></div>
<div class="btn tb" style="left:316px;background:#dadada"><svg style="left:-1px;top:-1px;width:26px;height:26px" viewBox="0 0 26 26" fill="#0808c8"><path d="M10.2 4.3L12.1 2.4L16.8 2.3L19.1 4.9L21.9 2.8L22 9.7L15 9.6L17.1 7.4L14.7 5.2L11.2 5z"/><path d="M4 5.2H9.8V11.8L7.3 10.3V13L9.2 15V18.1L7.1 17.6L4 15z"/><path d="M10.2 17.6L15.3 13.2V16.2L16.8 16.8L19.1 15.6L21.4 11.2L22.3 11.8L22.6 16.2L19.7 19.7L15.9 20L15.6 22.9L14.4 22.6z"/></svg></div>
<div class="btn tb" style="left:344px"><svg style="left:-1px;top:-1px;width:26px;height:26px" viewBox="0 0 26 26"><path d="M9.4 13.2L14.2 16.6L6.8 23.4L2.4 19.4z" fill="#f2f2f2"/><path d="M12.6 16L6 22" stroke="#b4b4b4" stroke-width="1.6"/><path d="M14 17L6.6 23.6" stroke="#2c2c2c" stroke-width="1.5"/><path d="M9.2 13L2.2 19.4" stroke="#303030" stroke-width="0.9" stroke-dasharray="1.1 1.3"/><path d="M12.1 2.9H21.4V5.2L23.5 5.6L23.6 13.2L21 15.9H13.8L9.4 12.6V5.4z" fill="#f0f0f0" stroke="#242424" stroke-width="1.3"/><path d="M13.4 17.3h8.2l2.6-2.8v-7" fill="none" stroke="#8c8c8c" stroke-width="1.5"/><path d="M21.2 6.3A4.1 4.1 0 1 0 21.2 12.2" fill="none" stroke="#787878" stroke-width="2.8"/><path d="M20.6 7.4A2.4 2.4 0 1 0 20.6 11" fill="#fff" stroke="#3a3a3a" stroke-width="0.8"/></svg></div>
<div class="btn tb" style="left:372px"><svg style="left:-1px;top:-1px;width:26px;height:26px" viewBox="0 0 26 26"><rect x="3.5" y="3.5" width="19.2" height="18.8" fill="#8a9620" stroke="#000" stroke-width="1.1"/><rect x="6.6" y="3.8" width="13" height="8.6" fill="#fafafa" stroke="#000" stroke-width="0.9"/><rect x="20.2" y="4.2" width="1.8" height="1" fill="#fff"/><rect x="20" y="5.6" width="0.8" height="6.4" fill="#000"/><rect x="7.4" y="15.3" width="12.3" height="7.2" fill="#000"/><rect x="16" y="16" width="3" height="6" fill="#fff"/></svg></div>
<div style="left:1275px;top:0;width:5px;height:20px;background:linear-gradient(90deg,#26324c,#101828)"></div>
<div style="left:0;top:993px;width:5px;height:31px;background:linear-gradient(180deg,#555 0,#222 25%,#000 60%)"></div>
<div style="left:17px;top:989px;width:26px;height:14px;border-radius:50%;border-top:2px solid #c4dcec;clip-path:inset(0 0 10px 0)"></div>
</body></html>
